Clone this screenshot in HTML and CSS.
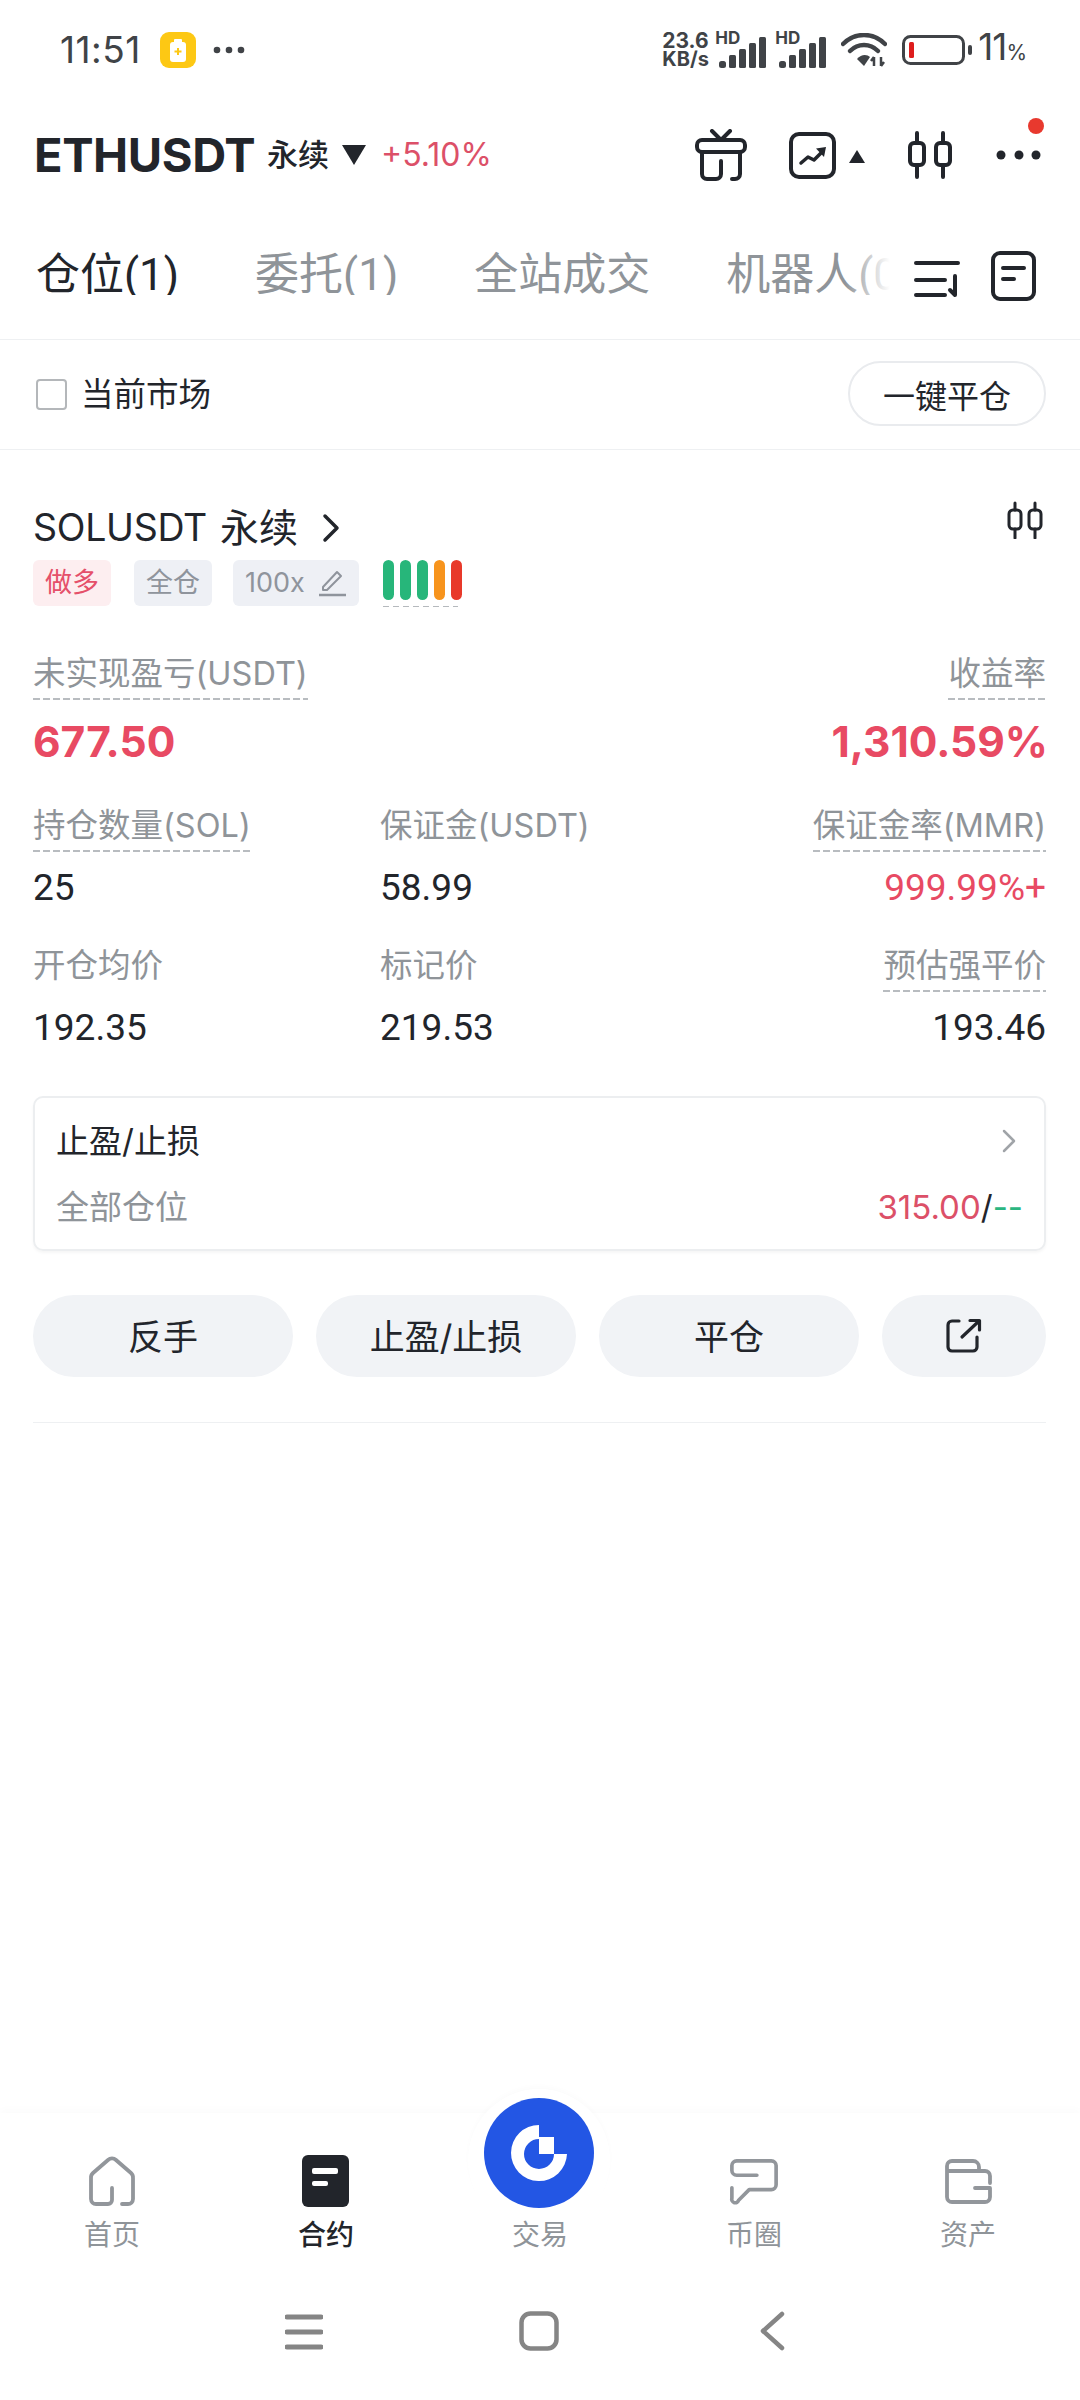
FILE: index.html
```html
<!DOCTYPE html>
<html lang="zh-CN">
<head>
<meta charset="utf-8">
<title>ETHUSDT</title>
<link rel="stylesheet" href="styles.css">
</head>
<body>
<div class="page">
  <div class="status">
    <div class="status-left">
      <span class="time">11:51</span>
      <svg class="st-app" viewBox="0 0 36 36"><rect width="36" height="36" rx="9" fill="#fdc814"/><rect x="14" y="7" width="8" height="4" rx="1" fill="#fff"/><rect x="10" y="10" width="16" height="20" rx="3" fill="#fff"/><path d="M18 16v7M14.500 19.500h7" stroke="#fdc814" stroke-width="2"/></svg>
      <svg class="st-dots" viewBox="0 0 32 8"><circle cx="4" cy="4" r="3.300" fill="#404347"/><circle cx="16" cy="4" r="3.300" fill="#404347"/><circle cx="28" cy="4" r="3.300" fill="#404347"/></svg>
    </div>
    <div class="status-right">
      <div class="speed"><span>23.6</span><span class="speed-unit">KB/s</span></div>
      <div class="sig">
        <span class="hd">HD</span>
        <svg class="sig-bars" viewBox="0 0 47 31"><g fill="#404347"><rect x="0" y="24" width="7" height="7" rx="2.500"/><rect x="10" y="18" width="7" height="13" rx="1.500"/><rect x="20" y="12" width="7" height="19" rx="1.500"/><rect x="30" y="6" width="7" height="25" rx="1.500"/><rect x="40" y="0" width="7" height="31" rx="1.500"/></g></svg>
      </div>
      <div class="sig">
        <span class="hd">HD</span>
        <svg class="sig-bars" viewBox="0 0 47 31"><g fill="#404347"><rect x="0" y="24" width="7" height="7" rx="2.500"/><rect x="10" y="18" width="7" height="13" rx="1.500"/><rect x="20" y="12" width="7" height="19" rx="1.500"/><rect x="30" y="6" width="7" height="25" rx="1.500"/><rect x="40" y="0" width="7" height="31" rx="1.500"/></g></svg>
      </div>
      <svg class="st-wifi" viewBox="0 0 46 34"><g fill="none" stroke="#404347" stroke-width="4.500" stroke-linecap="round"><path d="M2 11C14 -1 32 -1 44 11"/><path d="M9 18C17 10 29 10 37 18"/></g><path d="M16 26C20 21 26 21 29 24L23 33Z" fill="#404347"/><path d="M33 24v9M40 24v9M33 24l-3 4M40 33l3-4" stroke="#404347" stroke-width="2.500" fill="none"/></svg>
      <svg class="st-batt" viewBox="0 0 70 30"><rect x="1.500" y="1.500" width="60" height="27" rx="7" fill="none" stroke="#404347" stroke-width="3"/><rect x="7" y="7" width="5" height="16" rx="1.500" fill="#de1d1d"/><rect x="66" y="10" width="4" height="10" rx="2" fill="#404347"/></svg>
      <span class="batt-num">11<small>%</small></span>
    </div>
  </div>

  <header class="head">
    <div class="pair">
      <span class="sym">ETHUSDT</span>
      <span class="perp">永续</span>
      <i class="tri-down"></i>
      <span class="chg">+5.10%</span>
    </div>
    <div class="head-icons">
      <svg class="ic-gift" viewBox="0 0 52 52"><g fill="none" stroke="#22252b" stroke-width="4" stroke-linecap="round" stroke-linejoin="round"><path d="M17 2l9 9 9-9"/><rect x="2" y="11" width="48" height="12" rx="5"/><path d="M7 23V45a5 5 0 0 0 5 5H21a5 5 0 0 0 5-5V32"/><path d="M45 23V45a5 5 0 0 1-5 5H37"/></g></svg>
      <svg class="ic-chart" viewBox="0 0 47 47"><rect x="2" y="2" width="43" height="43" rx="8" fill="none" stroke="#22252b" stroke-width="4"/><path d="M12 31l7-6 6 3 8-8" fill="none" stroke="#22252b" stroke-width="3.500" stroke-linecap="round" stroke-linejoin="round"/><path d="M27 16.500L37 15l-2 10z" fill="#22252b"/></svg>
      <i class="tri-up"></i>
      <svg class="ic-candle" viewBox="0 0 44 48"><g fill="none" stroke="#22252b" stroke-width="4" stroke-linecap="round"><path d="M9 2V12M9 34V46M35 2V12M35 34V46"/><rect x="2" y="12" width="14" height="22" rx="4"/><rect x="28" y="12" width="14" height="22" rx="4"/></g></svg>
      <div class="more">
        <svg class="ic-more" viewBox="0 0 45 10"><circle cx="5" cy="5" r="4.500" fill="#22252b"/><circle cx="23" cy="5" r="4.500" fill="#22252b"/><circle cx="40" cy="5" r="4.500" fill="#22252b"/></svg>
        <i class="red-dot"></i>
      </div>
    </div>
  </header>

  <nav class="tabs">
    <div class="tab-strip">
      <span class="tab tab-on">仓位(1)</span>
      <span class="tab">委托(1)</span>
      <span class="tab">全站成交</span>
      <span class="tab">机器人(0)</span>
      <i class="tab-fade"></i>
      <i class="tab-mask"></i>
    </div>
    <div class="tab-tools">
      <svg class="ic-sort" viewBox="0 0 46 38"><g fill="none" stroke="#22252b" stroke-width="4" stroke-linecap="round" stroke-linejoin="round"><path d="M2 3H44M2 20H31M2 35H31"/><path d="M41 16V35L36 30"/></g></svg>
      <svg class="ic-note" viewBox="0 0 45 50"><rect x="2" y="2" width="41" height="46" rx="7" fill="none" stroke="#22252b" stroke-width="4"/><path d="M12 17H33M12 28H23" stroke="#22252b" stroke-width="4" stroke-linecap="round"/></svg>
    </div>
  </nav>

  <div class="filter">
    <label class="check"><i class="box"></i><span>当前市场</span></label>
    <button class="close-all">一键平仓</button>
  </div>

  <section class="card">
    <div class="card-head">
      <div>
        <div class="title"><span>SOLUSDT</span><span class="title-cn">永续</span>
          <svg class="ic-chev" viewBox="0 0 18 30"><path d="M3 3l12 12L3 27" fill="none" stroke="#22252b" stroke-width="3.500" stroke-linecap="round" stroke-linejoin="round"/></svg>
        </div>
        <div class="tags">
          <span class="tag tag-red">做多</span>
          <span class="tag tag-cross">全仓</span>
          <span class="tag tag-lev">100x
            <svg class="ic-pen" viewBox="0 0 28 28"><path d="M5 18L19 3l4 4L9 21H5z" fill="none" stroke="#8f949c" stroke-width="2" stroke-linejoin="round"/><path d="M1 26H28" stroke="#8f949c" stroke-width="2.500"/></svg>
          </span>
          <span class="risk"><i class="g"></i><i class="g"></i><i class="g"></i><i class="o"></i><i class="r"></i></span>
        </div>
      </div>
      <svg class="ic-candle-sm" viewBox="0 0 36 38"><g fill="none" stroke="#22252b" stroke-width="3" stroke-linecap="round"><path d="M8 2V9M8 28V37M28 2V9M28 28V37"/><rect x="2" y="9" width="12" height="19" rx="4"/><rect x="22" y="9" width="12" height="19" rx="4"/></g></svg>
    </div>

    <div class="pnl">
      <div><span class="lbl dash">未实现盈亏(USDT)</span><div class="pnl-val">677.50</div></div>
      <div class="right"><span class="lbl dash">收益率</span><div class="pnl-val pnl-pct">1,310.59%</div></div>
    </div>

    <div class="stats">
      <div><span class="lbl dash">持仓数量(SOL)</span><div class="val">25</div></div>
      <div><span class="lbl">保证金(USDT)</span><div class="val">58.99</div></div>
      <div class="right"><span class="lbl dash">保证金率(MMR)</span><div class="val red">999.99%+</div></div>
      <div><span class="lbl">开仓均价</span><div class="val">192.35</div></div>
      <div><span class="lbl">标记价</span><div class="val">219.53</div></div>
      <div class="right"><span class="lbl dash">预估强平价</span><div class="val">193.46</div></div>
    </div>

    <div class="tpsl">
      <div class="tpsl-row"><span>止盈/止损</span>
        <svg class="ic-chev-g" viewBox="0 0 14 24"><path d="M2 2l10 10L2 22" fill="none" stroke="#a0a4a8" stroke-width="2.500" stroke-linecap="round" stroke-linejoin="round"/></svg>
      </div>
      <div class="tpsl-row tpsl-sub"><span class="gray">全部仓位</span><span class="tpsl-vals"><b>315.00</b>/<em>--</em></span></div>
    </div>

    <div class="actions">
      <button class="act">反手</button>
      <button class="act">止盈/止损</button>
      <button class="act">平仓</button>
      <button class="act act-share"><svg viewBox="0 0 36 36"><g fill="none" stroke="#22252b" stroke-width="3.200" stroke-linecap="round" stroke-linejoin="round"><path d="M13 3H6a4 4 0 0 0-4 4V29a4 4 0 0 0 4 4H27a4 4 0 0 0 4-4V19"/><path d="M16 19L33 3M24 2.500H33.500V12"/></g></svg></button>
    </div>
    <div class="card-end"></div>
  </section>

  <footer class="foot">
    <div class="bump"></div>
    <div class="fab"><svg viewBox="0 0 110 110"><circle cx="55" cy="55" r="55" fill="#2356e4"/><path d="M55 27A28 28 0 1 0 83 56H70A15 15 0 1 1 55 41Z" fill="#fff"/><rect x="55" y="39" width="15" height="17" fill="#fff"/></svg></div>
    <div class="navs">
      <div class="nav"><svg class="nav-ic" viewBox="0 0 50 50"><path d="M25 32V44a4 4 0 0 1-4 4H9a5 5 0 0 1-5-5V22a6 6 0 0 1 2-5L21 4a6 6 0 0 1 8 0L44 17a6 6 0 0 1 2 5V43a5 5 0 0 1-5 5H35" fill="none" stroke="#92969b" stroke-width="3.800" stroke-linecap="round" stroke-linejoin="round"/></svg><span>首页</span></div>
      <div class="nav nav-on"><svg class="nav-ic" viewBox="0 0 50 52"><rect x="1" y="0" width="47" height="52" rx="6" fill="#22252b"/><rect x="11" y="13" width="26" height="6" rx="2" fill="#fff"/><rect x="11" y="26" width="16" height="5" rx="2" fill="#fff"/></svg><span>合约</span></div>
      <div class="nav nav-spacer"><span>交易</span></div>
      <div class="nav"><svg class="nav-ic" viewBox="0 0 52 50"><path d="M29 19H8a5 5 0 0 1-5-5V9a5 5 0 0 1 5-5H44a5 5 0 0 1 5 5V29a5 5 0 0 1-5 5H21L10 45a3 3 0 0 1-7-2V32" fill="none" stroke="#92969b" stroke-width="3.800" stroke-linecap="round" stroke-linejoin="round"/></svg><span>币圈</span></div>
      <div class="nav"><svg class="nav-ic" viewBox="0 0 50 50"><path d="M47 27V20a5 5 0 0 0-5-5H36V11a6 6 0 0 0-6-6H9a5 5 0 0 0-5 5V41a5 5 0 0 0 5 5H42a5 5 0 0 0 5-5V32H32M4 15H36" fill="none" stroke="#92969b" stroke-width="3.800" stroke-linecap="round" stroke-linejoin="round"/></svg><span>资产</span></div>
    </div>
    <div class="sysnav">
      <svg class="sys-menu" viewBox="0 0 38 36"><path d="M2 3H36M2 18H36M2 33H36" stroke="#858585" stroke-width="5" stroke-linecap="round"/></svg>
      <svg class="sys-home" viewBox="0 0 40 40"><rect x="2.500" y="2.500" width="35" height="35" rx="9" fill="none" stroke="#858585" stroke-width="4.500"/></svg>
      <svg class="sys-back" viewBox="0 0 26 40"><path d="M23 3L4 20l19 17" fill="none" stroke="#858585" stroke-width="4.500" stroke-linecap="round" stroke-linejoin="round"/></svg>
    </div>
  </footer>
</div>
</body>
</html>
```

FILE: styles.css
```css
* { box-sizing: border-box; }
html, body { margin: 0; padding: 0; background: #fff; }
body { font-family: Inter, "Noto Sans CJK SC", sans-serif; color: #22252b; }
i { font-style: normal; display: block; }
svg { display: block; flex: none; }
button { font: inherit; color: inherit; border: 0; padding: 0; }

.page { position: relative; width: 1080px; height: 2400px; display: flex; flex-direction: column; overflow: hidden; }

/* status bar */
.status { height: 100px; padding: 0 53px 0 60px; display: flex; justify-content: space-between; align-items: center; flex: none; }
.status-left { display: flex; align-items: center; }
.time { font-size: 37px; line-height: 40px; color: #404347; width: 100px; letter-spacing: 0.5px; }
.st-app { width: 36px; height: 36px; }
.st-dots { width: 32px; height: 8px; margin-left: 17px; }
.status-right { display: flex; align-items: center; }
.speed { display: flex; flex-direction: column; color: #404347; width: 56px; font-weight: 700; margin-left: -2px; }
.speed span { display: block; height: 18px; line-height: 18px; font-size: 21px; white-space: nowrap; }
.speed .speed-unit { font-size: 20px; }
.sig { position: relative; width: 60px; height: 34px; margin-left: -1px; margin-right: 1px; }
.hd { position: absolute; left: -2px; top: -4px; font-size: 17px; line-height: 18px; font-weight: 700; color: #404347; }
.sig-bars { position: absolute; left: 2px; top: 4px; width: 47px; height: 31px; }
.st-wifi { width: 46px; height: 34px; margin-left: 3px; }
.st-batt { width: 70px; height: 30px; margin-left: 15px; }
.batt-num { font-size: 37px; line-height: 40px; color: #404347; margin-left: 6px; letter-spacing: -1px; }
.batt-num small { font-size: 21px; letter-spacing: 0; }

/* header */
.head { height: 105px; padding: 5px 39px 0 34px; display: flex; justify-content: space-between; align-items: center; flex: none; }
.pair { display: flex; align-items: center; }
.sym { font-size: 47px; font-weight: 700; line-height: 60px; letter-spacing: -0.4px; width: 233px; }
.perp { font-size: 31px; font-weight: 500; line-height: 40px; width: 75px; }
.tri-down { width: 0; height: 0; border-left: 12px solid transparent; border-right: 12px solid transparent; border-top: 20px solid #22252b; }
.chg { font-size: 32px; line-height: 40px; color: #dc5068; margin-left: 15px; }
.head-icons { display: flex; align-items: center; }
.ic-gift { width: 52px; height: 52px; }
.ic-chart { width: 47px; height: 47px; margin-left: 42px; }
.tri-up { width: 0; height: 0; border-left: 8px solid transparent; border-right: 8px solid transparent; border-bottom: 13px solid #22252b; margin-left: 13px; margin-top: 2px; }
.ic-candle { width: 44px; height: 48px; margin-left: 43px; }
.more { position: relative; width: 45px; height: 10px; margin-left: 44px; }
.ic-more { width: 45px; height: 10px; }
.red-dot { position: absolute; right: -3px; top: -32px; width: 16px; height: 16px; border-radius: 50%; background: #e8392e; }

/* tabs */
.tabs { height: 135px; flex: none; display: flex; justify-content: space-between; align-items: flex-start; padding: 37px 44px 0 36px; border-bottom: 1px solid #eef0f2; }
.tab-strip { position: relative; display: flex; gap: 76px; width: 878px; height: 66px; white-space: nowrap; }
.tab { font-family: Roboto, "Noto Sans CJK SC", sans-serif; font-size: 44px; line-height: 66px; color: #8f9499; }
.tab-on { color: #22252b; }
.tab-fade { position: absolute; right: 0; top: 0; width: 69px; height: 66px; background: linear-gradient(90deg, rgba(255,255,255,0), #fff 65%); }
.tab-mask { position: absolute; left: 0; right: 0; top: 53px; height: 13px; background: #fff; }
.tab-tools { display: flex; align-items: center; gap: 31px; margin-top: 9px; }
.ic-sort { width: 46px; height: 38px; margin-top: 6px; }
.ic-note { width: 45px; height: 50px; }

/* filter */
.filter { height: 110px; flex: none; display: flex; justify-content: space-between; align-items: center; padding: 0 34px 0 36px; border-bottom: 1px solid #eef0f2; }
.check { display: flex; align-items: center; gap: 14px; font-size: 32.500px; line-height: 40px; }
.box { width: 31px; height: 31px; border: 2px solid #b4b7ba; border-radius: 4px; }
.close-all { width: 198px; height: 65px; margin-top: -2px; border-radius: 33px; border: 2px solid #e9ebee; background: #fff; font-size: 32px; }

/* card */
.card { padding: 54px 34px 0 33px; display: flex; flex-direction: column; flex: none; }
.card-head { display: flex; justify-content: space-between; align-items: flex-start; }
.title { height: 50px; padding-bottom: 2px; display: flex; align-items: center; font-size: 37.500px; line-height: 48px; letter-spacing: -0.300px; }
.title-cn { margin-left: 13px; letter-spacing: 0; font-size: 39px; }
.ic-chev { width: 18px; height: 30px; margin-left: 24px; }
.tags { display: flex; align-items: flex-start; margin-top: 6px; }
.tag { height: 46px; padding: 0 12px; background: #eef0f5; color: #8f949c; border-radius: 6px; font-size: 27px; line-height: 46px; margin-right: 23px; display: flex; align-items: center; }
.tag-red { background: #fdeef0; color: #e5506a; }
.tag-cross { margin-right: 21px; }
.tag-lev { gap: 13px; margin-right: 24px; padding-right: 13px; }
.ic-pen { width: 28px; height: 28px; }
.risk { display: flex; gap: 6px; width: 79px; height: 47px; padding-bottom: 7px; background: repeating-linear-gradient(90deg, #b5b9bd 0 6px, transparent 6px 10px) left bottom / 75px 1.500px no-repeat; }
.risk i { width: 11px; height: 40px; border-radius: 6px; }
.risk .g { background: #27b67a; }
.risk .o { background: #f7941d; }
.risk .r { background: #e8392a; }
.ic-candle-sm { width: 36px; height: 38px; margin: -3px 3px 0 0; }

.lbl { display: inline-block; font-size: 32.500px; line-height: 40px; padding-bottom: 6px; color: #8f9499; vertical-align: top; }
.dash { background: repeating-linear-gradient(90deg, #b8bcc0 0 7px, transparent 7px 10px) left bottom / 100% 2px no-repeat; }
.right { text-align: right; }
.pnl { display: flex; justify-content: space-between; margin-top: 47px; }
.pnl-val { font-size: 42.500px; line-height: 60px; font-weight: 700; color: #e84a63; margin-top: 12px; }
.pnl-pct { margin-right: -2px; }
.stats { display: grid; grid-template-columns: 347px 1fr auto; row-gap: 28px; margin-top: 34px; }
.stats > div { height: 112px; }
.val { font-family: Roboto, sans-serif; font-size: 37px; line-height: 60px; margin-top: 6px; }
.val.red { color: #e84a63; }

.tpsl { height: 155px; margin-top: 38px; border: 2px solid #eceef0; border-radius: 10px; box-shadow: 0 2px 3px rgba(0,0,0,.04); padding: 18px 21px 0 21px; display: flex; flex-direction: column; }
.tpsl-row { display: flex; justify-content: space-between; align-items: center; font-size: 33px; line-height: 50px; height: 50px; }
.ic-chev-g { width: 14px; height: 24px; margin-right: 7px; }
.tpsl-sub { margin-top: 16px; }
.gray { color: #8f9499; }
.tpsl-vals { font-size: 33px; }
.tpsl-vals b { font-weight: 400; color: #dc5068; }
.tpsl-vals em { font-style: normal; color: #2bb580; }

.actions { display: flex; gap: 23px; margin-top: 44px; }
.act { flex: 1; height: 82px; padding-bottom: 3px; border-radius: 41px; background: #f1f3f6; font-size: 35px; display: flex; justify-content: center; align-items: center; }
.act-share { flex: none; width: 164px; padding-bottom: 0; }
.act-share svg { width: 36px; height: 36px; }
.card-end { height: 1px; background: #eef0f2; margin-top: 45px; }

/* footer */
.foot { position: relative; margin-top: auto; height: 287px; flex: none; background: #fff; box-shadow: 0 -4px 8px rgba(0,0,0,.015); display: flex; flex-direction: column; }
.bump { position: absolute; left: 468px; top: -24px; width: 142px; height: 142px; border-radius: 50%; background: #fff; box-shadow: 0 -3px 5px rgba(0,0,0,.015); }
.fab { position: absolute; left: 484px; top: -15px; width: 110px; height: 110px; }
.fab svg { width: 110px; height: 110px; }
.navs { position: relative; display: grid; grid-template-columns: repeat(5, 214px); padding: 42px 5px 0 5px; height: 175px; }
.nav { display: flex; flex-direction: column; align-items: center; font-size: 28px; line-height: 34px; color: #8f9499; }
.nav-ic { width: 50px; height: 52px; margin-bottom: 11px; }
.nav-on { color: #22252b; font-weight: 500; }
.nav-spacer { padding-top: 63px; }
.sysnav { position: relative; flex: 1; display: grid; grid-template-columns: 38px 40px 26px; justify-content: start; padding: 23px 0 0 285px; }
.sys-menu { width: 38px; height: 36px; margin-top: 3px; }
.sys-home { width: 40px; height: 40px; margin-left: 196px; }
.sys-back { width: 26px; height: 40px; margin-left: 396px; }
```
